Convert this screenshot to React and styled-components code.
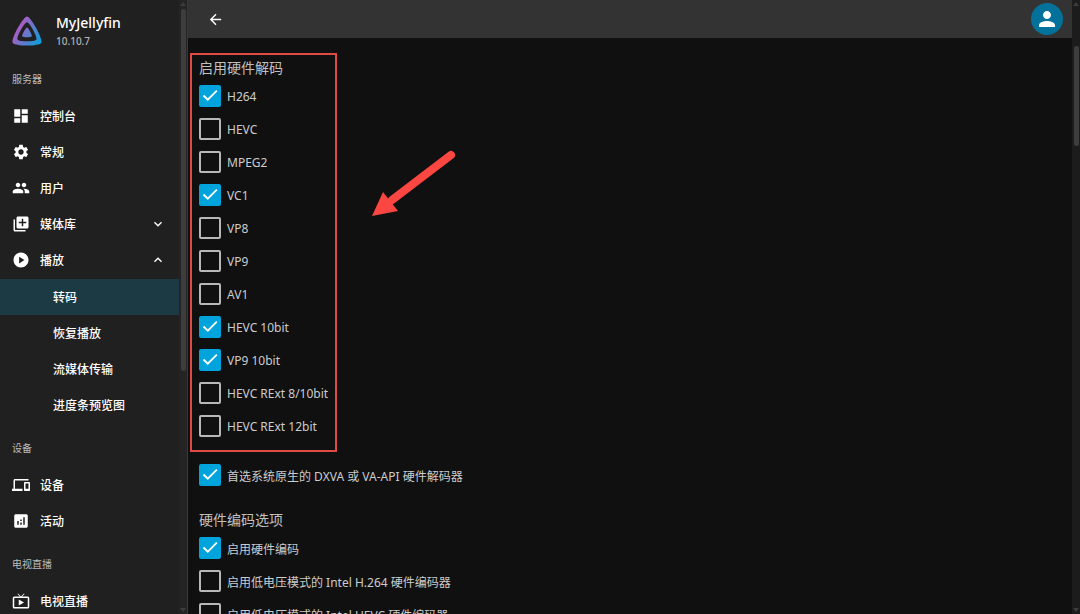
import { useState } from "react";
import styled, { createGlobalStyle } from "styled-components";
import {
  MdAnalytics,
  MdArrowBack,
  MdDashboard,
  MdDevices,
  MdExpandLess,
  MdExpandMore,
  MdLibraryAdd,
  MdLiveTv,
  MdPeople,
  MdPerson,
  MdPlayCircle,
  MdSettings,
} from "react-icons/md";

const GlobalStyle = createGlobalStyle`
  * {
    box-sizing: border-box;
  }
  body {
    margin: 0;
    background: #101010;
    color: #fff;
    font-family: "Noto Sans", "Noto Sans CJK SC", sans-serif;
    font-size: 12px;
  }
  button, input {
    font: inherit;
    color: inherit;
    margin: 0;
  }
`

const Page = styled.div`
  display: flex;
  height: 100vh;
  overflow: hidden;
`

const Sidebar = styled.aside`
  display: flex;
  flex: none;
  width: 188px;
  background: #202020;
  border-right: 1px solid #383838;
`

const SidebarContent = styled.div`
  flex: 1;
  overflow: hidden;
`

const Brand = styled.a`
  display: flex;
  align-items: center;
  height: 60px;
  padding: 2px 12px 0 11px;
  gap: 13px;
  color: #fff;
  text-decoration: none;
  svg {
    flex: none;
    width: 32px;
    height: 32px;
  }
  .title {
    font-size: 14px;
    font-weight: 500;
    line-height: 20px;
  }
  .version {
    font-size: 10px;
    font-weight: 500;
    line-height: 16px;
    color: #b4b4b4;
  }
`

const NavSection = styled.nav`
  margin-bottom: 6px;
  h2 {
    margin: 0;
    padding: 0 12px;
    font-size: 10px;
    font-weight: 400;
    line-height: 38px;
    color: #bcbcbc;
  }
  ul {
    list-style: none;
    margin: 0;
    padding: 0;
  }
  ul ul {
    padding-top: 1px;
  }
`

const NavItem = styled.a`
  display: flex;
  align-items: center;
  width: 100%;
  height: 36px;
  padding: 0 13px 0 ${({ $nested }) => ($nested ? "53px" : "12px")};
  border: 0;
  background: ${({ $active }) => ($active ? "#1b3a44" : "transparent")};
  color: #fff;
  font-weight: 500;
  text-decoration: none;
  text-align: left;
  cursor: pointer;
  svg {
    flex: none;
    width: 18px;
    height: 18px;
  }
  .label {
    flex: 1;
    margin-left: ${({ $nested }) => ($nested ? "0" : "10px")};
  }
  .arrow {
    width: 16px;
    height: 16px;
  }
`

const ScrollTrack = styled.div`
  display: flex;
  flex-direction: column;
  justify-content: space-between;
  align-items: center;
  flex: none;
  width: 8px;
  padding: 2px 0;
  background: ${({ $color }) => $color};
`

const ScrollThumb = styled.div`
  width: 5px;
  height: ${({ $size }) => $size};
  margin: ${({ $offset }) => $offset} 0 auto;
  border-radius: 2px;
  background: #3d3d3d;
`

const ScrollArrow = styled.span`
  border: 3px solid transparent;
  border-top-width: ${({ $up }) => ($up ? "0" : "4px")};
  border-bottom-width: ${({ $up }) => ($up ? "4px" : "0")};
  border-top-color: ${({ $up }) => ($up ? "transparent" : "#3d3d3d")};
  border-bottom-color: ${({ $up }) => ($up ? "#3d3d3d" : "transparent")};
`

const Content = styled.div`
  display: flex;
  flex-direction: column;
  flex: 1;
  min-width: 0;
`

const Header = styled.header`
  display: flex;
  align-items: center;
  justify-content: space-between;
  flex: none;
  height: 38px;
  padding: 0 9px 0 16px;
  background: #333;
`

const IconButton = styled.button`
  display: grid;
  place-items: center;
  width: 22px;
  height: 22px;
  padding: 0;
  border: 0;
  background: none;
  cursor: pointer;
  svg {
    width: 17px;
    height: 17px;
  }
`

const Avatar = styled(IconButton)`
  width: 32px;
  height: 32px;
  border-radius: 50%;
  background: #04719a;
  svg {
    width: 24px;
    height: 24px;
  }
`

const Settings = styled.main`
  position: relative;
  flex: 1;
  min-height: 0;
  overflow: hidden;
  padding: 18px 11px 0;
`

const OptionGroup = styled.section`
  position: relative;
  width: fit-content;
  margin-bottom: 16px;
  h2 {
    margin: 0;
    font-size: 14px;
    font-weight: 400;
    line-height: 24px;
    color: #c0c0c0;
  }
`

const Highlight = styled.div`
  position: absolute;
  inset: -3px -9px -9px -9px;
  border: 2px solid #e04a44;
  pointer-events: none;
`

const Pointer = styled.svg`
  position: absolute;
  left: 184px;
  top: 112px;
  width: 84px;
  height: 67px;
  pointer-events: none;
`

const Option = styled.label`
  display: flex;
  align-items: center;
  gap: 6px;
  height: 33px;
  color: #ccc;
  white-space: nowrap;
  cursor: pointer;
`

const CheckboxWrapper = styled.span`
  display: grid;
  width: 22px;
  height: 22px;
  margin-bottom: 1px;
  input, svg {
    grid-area: 1 / 1;
    width: 22px;
    height: 22px;
  }
  input {
    appearance: none;
    border: 2px solid #b8b8b8;
    border-radius: 2px;
    cursor: pointer;
  }
  input:checked {
    border-color: #00a4dc;
    background: #00a4dc;
  }
  svg {
    visibility: hidden;
    pointer-events: none;
  }
  input:checked + svg {
    visibility: visible;
  }
`

const Logo = () => (
  <svg viewBox="0 0 512 512" aria-hidden="true">
    <defs>
      <linearGradient id="jelly" x1="110" y1="213" x2="497" y2="437" gradientUnits="userSpaceOnUse">
        <stop offset="0" stopColor="#aa5cc3" />
        <stop offset="1" stopColor="#00a4dc" />
      </linearGradient>
    </defs>
    <path
      fill="url(#jelly)"
      d="M256 201.600c-20.400 0-86.200 119.300-76.200 139.400s142.500 19.900 152.400 0-55.700-139.400-76.200-139.400z"
    />
    <path
      fill="url(#jelly)"
      fillRule="evenodd"
      d="M256 23.300c-61.600 0-259.800 359.400-229.600 420.100s429.300 60 459.200 0S317.600 23.300 256 23.300zm150.500 367.500c-19.600 39.300-281.100 39.800-300.900 0S215.700 115.500 256 115.500s170.100 235.900 150.500 275.300z"
    />
  </svg>
)

const serverItems = [
  { label: "控制台", icon: MdDashboard },
  { label: "常规", icon: MdSettings },
  { label: "用户", icon: MdPeople },
]

const playbackItems = ["转码", "恢复播放", "流媒体传输", "进度条预览图"]

const decoders = [
  { label: "H264", checked: true },
  { label: "HEVC" },
  { label: "MPEG2" },
  { label: "VC1", checked: true },
  { label: "VP8" },
  { label: "VP9" },
  { label: "AV1" },
  { label: "HEVC 10bit", checked: true },
  { label: "VP9 10bit", checked: true },
  { label: "HEVC RExt 8/10bit" },
  { label: "HEVC RExt 12bit" },
]

const encoders = [
  { label: "启用硬件编码", checked: true },
  { label: "启用低电压模式的 Intel H.264 硬件编码器" },
  { label: "启用低电压模式的 Intel HEVC 硬件编码器" },
]

const NavLink = ({ label, icon: Icon, nested, active }) => (
  <li>
    <NavItem href="#" $nested={nested} $active={active} aria-current={active ? "page" : undefined}>
      {Icon && <Icon />}
      <span className="label">{label}</span>
    </NavItem>
  </li>
)

const NavGroup = ({ label, icon: Icon, defaultOpen = false, children }) => {
  const [open, setOpen] = useState(defaultOpen)

  return (
    <li>
      <NavItem as="button" type="button" aria-expanded={open} onClick={() => setOpen(!open)}>
        <Icon />
        <span className="label">{label}</span>
        {open ? <MdExpandLess className="arrow" /> : <MdExpandMore className="arrow" />}
      </NavItem>
      {open && children}
    </li>
  )
}

const CheckOption = ({ label, checked }) => (
  <Option>
    <CheckboxWrapper>
      <input type="checkbox" defaultChecked={checked} />
      <svg viewBox="0 0 22 22" aria-hidden="true">
        <path d="M4.500 10.500l4.300 4.200 9-9" fill="none" stroke="#fff" strokeWidth="1.800" />
      </svg>
    </CheckboxWrapper>
    <span>{label}</span>
  </Option>
)

const App = () => {
  return (
    <Page>
      <GlobalStyle />
      <Sidebar>
        <SidebarContent>
          <Brand href="#">
            <Logo />
            <div>
              <div className="title">MyJellyfin</div>
              <div className="version">10.10.7</div>
            </div>
          </Brand>
          <NavSection aria-label="服务器">
            <h2>服务器</h2>
            <ul>
              {serverItems.map((item) => (
                <NavLink key={item.label} {...item} />
              ))}
              <NavGroup label="媒体库" icon={MdLibraryAdd} />
              <NavGroup label="播放" icon={MdPlayCircle} defaultOpen>
                <ul>
                  {playbackItems.map((label, i) => (
                    <NavLink key={label} label={label} nested active={i === 0} />
                  ))}
                </ul>
              </NavGroup>
            </ul>
          </NavSection>
          <NavSection aria-label="设备">
            <h2>设备</h2>
            <ul>
              <NavLink label="设备" icon={MdDevices} />
              <NavLink label="活动" icon={MdAnalytics} />
            </ul>
          </NavSection>
          <NavSection aria-label="电视直播">
            <h2>电视直播</h2>
            <ul>
              <NavLink label="电视直播" icon={MdLiveTv} />
            </ul>
          </NavSection>
        </SidebarContent>
        <ScrollTrack $color="#242424">
          <ScrollArrow $up />
          <ScrollThumb $size="59vh" $offset="3px" />
          <ScrollArrow />
        </ScrollTrack>
      </Sidebar>
      <Content>
        <Header>
          <IconButton type="button" aria-label="返回">
            <MdArrowBack />
          </IconButton>
          <Avatar type="button" aria-label="用户">
            <MdPerson />
          </Avatar>
        </Header>
        <Settings>
          <OptionGroup>
            <h2>启用硬件解码</h2>
            {decoders.map((item) => (
              <CheckOption key={item.label} {...item} />
            ))}
            <Highlight />
          </OptionGroup>
          <OptionGroup>
            <CheckOption label="首选系统原生的 DXVA 或 VA-API 硬件解码器" checked />
          </OptionGroup>
          <OptionGroup>
            <h2>硬件编码选项</h2>
            {encoders.map((item) => (
              <CheckOption key={item.label} {...item} />
            ))}
          </OptionGroup>
          <Pointer viewBox="0 0 84 67" aria-hidden="true">
            <path d="M79 5L20 50" stroke="#fc4642" strokeWidth="8" strokeLinecap="round" />
            <path d="M0 66L11 42 26 61z" fill="#fc4642" />
          </Pointer>
        </Settings>
      </Content>
      <ScrollTrack $color="#1c1c1c">
        <ScrollArrow $up />
        <ScrollThumb $size="100px" $offset="40px" />
        <ScrollArrow />
      </ScrollTrack>
    </Page>
  )
}

export default App;
